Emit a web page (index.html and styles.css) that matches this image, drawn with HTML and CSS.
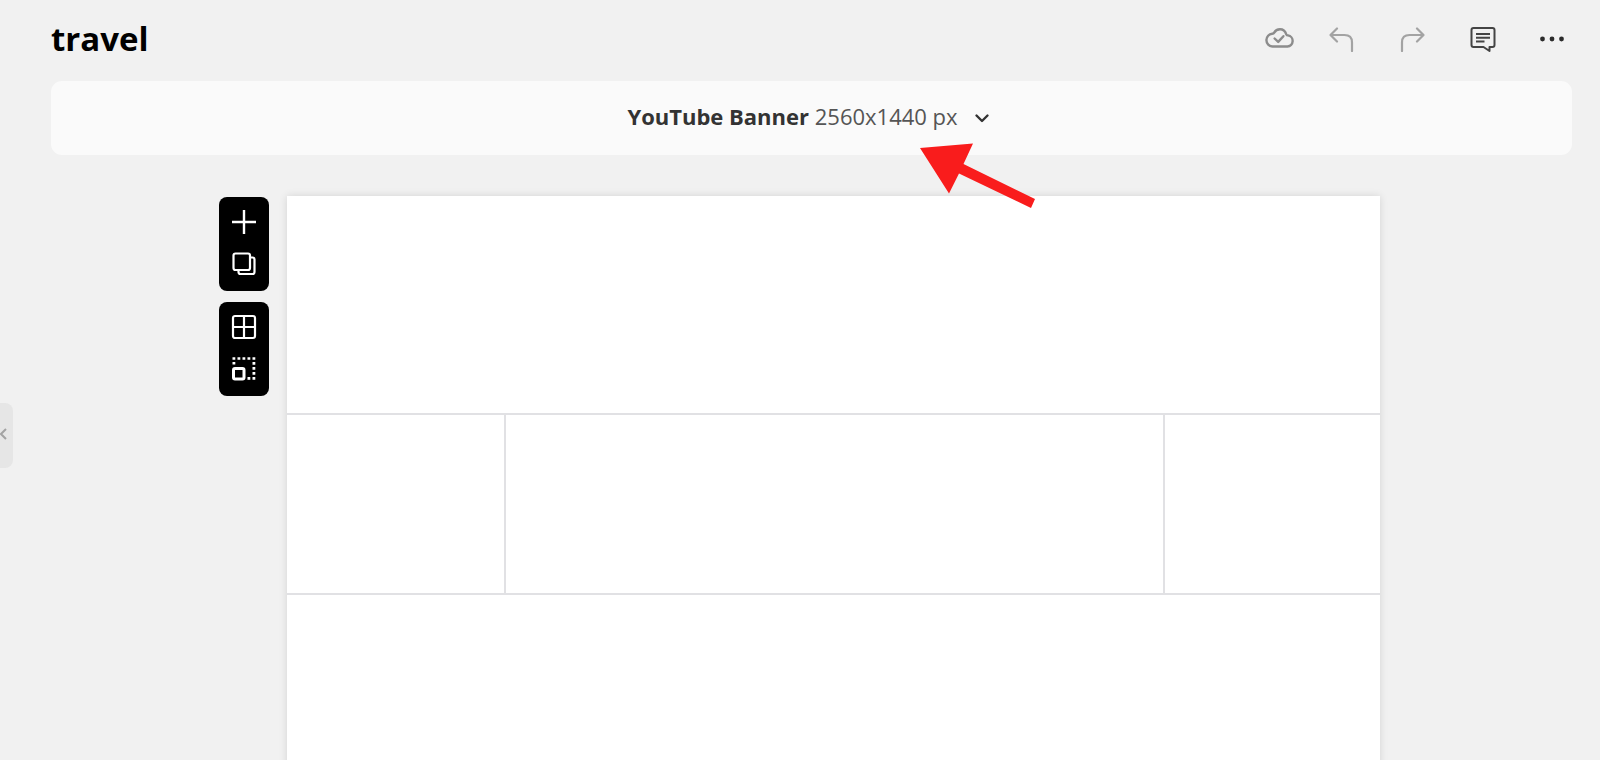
FILE: index.html
```html
<!DOCTYPE html>
<html lang="en">
<head>
    <meta charset="UTF-8">
    <meta name="viewport" content="width=device-width, initial-scale=1.0">
    <title>travel</title>
    <link rel="stylesheet" href="styles.css">
</head>
<body>
    <header class="topbar">
        <h1 class="project-name">travel</h1>
        <div class="actions">
            <div class="action-group">
                <button type="button" class="action" aria-label="Saved">
                    <svg width="32" height="28" viewBox="0 1 32 28" fill="none" stroke="#8c8c8c" stroke-width="2.4" stroke-linecap="round" stroke-linejoin="round">
                        <path d="M8.5 22.5H23.5A5.6 5.6 0 0 0 24 11.4C23.2 11.4 22.6 11 22.2 10.2C21.2 7 19 5.2 16 5.2C13.4 5.2 11.4 6.3 10.2 8.6C9.8 9.4 9.2 9.7 8.3 9.7C5 9.9 2.4 12.7 2.4 16.1C2.4 19.7 5.2 22.5 8.5 22.5Z"/>
                        <path d="M10.6 14.5L14.2 17.9L19.4 12.2"/>
                    </svg>
                </button>
                <button type="button" class="action" aria-label="Undo">
                    <svg width="26" height="26" viewBox="0 0 26 26" fill="none" stroke="#a3a3a3" stroke-width="2.2" stroke-linecap="round" stroke-linejoin="round">
                        <path d="M8 2.5L1.5 9L8 15.5M1.5 9H15.5Q23 9 23 16.500V25"/>
                    </svg>
                </button>
            </div>
            <button type="button" class="action" aria-label="Redo">
                <svg width="26" height="26" viewBox="0 0 26 26" fill="none" stroke="#a3a3a3" stroke-width="2.2" stroke-linecap="round" stroke-linejoin="round">
                    <path d="M18 2.5L24.5 9L18 15.5M24.5 9H10.5Q3 9 3 16.5V25"/>
                </svg>
            </button>
            <button type="button" class="action" aria-label="Comments">
                <svg width="28" height="28" viewBox="-1 0 28 28" fill="none" stroke="#444" stroke-width="2" stroke-linejoin="round">
                    <path d="M4.500 3H23.500Q25.500 3 25.500 5V20Q25.500 22 23.500 22H20.500V26L14.500 22H4.500Q2.500 22 2.500 20V5Q2.500 3 4.500 3Z"/>
                    <path d="M7 9H21M7 12.700H21M7 16.400H15.500"/>
                </svg>
            </button>
            <button type="button" class="action" aria-label="More">
                <svg width="28" height="28" viewBox="0 0 28 28" fill="#2b2b2b">
                    <circle cx="4.5" cy="14" r="2.4"/>
                    <circle cx="14" cy="14" r="2.4"/>
                    <circle cx="23.5" cy="14" r="2.4"/>
                </svg>
            </button>
        </div>
    </header>

    <div class="size-bar">
        <button type="button" class="size-button">
            <span><strong>YouTube Banner</strong> 2560x1440 px</span>
            <svg width="16" height="16" viewBox="0 0 16 16" fill="none" stroke="#333" stroke-width="2.4" stroke-linecap="round" stroke-linejoin="round">
                <path d="M2.500 7.500L8 13L13.500 7.500"/>
            </svg>
        </button>
        <svg class="arrow" width="120" height="70" viewBox="0 0 120 70" fill="#f91c1c">
            <path d="M2 6L55 1.500L45.500 22L117 57L113 66L41 31.500L31 51.500Z"/>
        </svg>
    </div>

    <main class="workspace">
        <div class="tools">
            <div class="tool-group">
                <button type="button" class="tool" aria-label="Add page">
                    <svg width="26" height="26" viewBox="0 0 26 26" fill="none" stroke="#fff" stroke-width="2.4">
                        <path d="M13 1V25M1 13H25"/>
                    </svg>
                </button>
                <button type="button" class="tool" aria-label="Duplicate page">
                    <svg width="26" height="26" viewBox="0 0 26 26" fill="none" stroke="#fff" stroke-width="2.2">
                        <rect x="2.500" y="2.500" width="16.500" height="16.500" rx="2"/>
                        <path d="M19 6.500H21.500Q23.500 6.500 23.500 8.500V21Q23.500 23 21.500 23H9.500Q7.500 23 7.500 21V19"/>
                    </svg>
                </button>
            </div>
            <div class="tool-group">
                <button type="button" class="tool" aria-label="Grid">
                    <svg width="26" height="26" viewBox="0 0 26 26" fill="none" stroke="#fff" stroke-width="2.2">
                        <rect x="2" y="2" width="22" height="22" rx="2"/>
                        <path d="M13 2V24M2 13H24"/>
                    </svg>
                </button>
                <button type="button" class="tool" aria-label="Resize">
                    <svg width="26" height="26" viewBox="0 0 26 26" fill="none" stroke="#fff">
                        <rect x="2.500" y="12.500" width="10.500" height="10.500" rx="1.500" stroke-width="3"/>
                        <path d="M1.500 2.500H25M1.500 7.300H4.300" stroke-width="2.600" stroke-dasharray="2.800 2.200"/>
                        <path d="M22.900 6V25" stroke-width="2.800" stroke-dasharray="2.800 2.200"/>
                        <path d="M16.500 22.400H19.300" stroke-width="2.800"/>
                    </svg>
                </button>
            </div>
        </div>
        <div class="canvas">
            <div class="zone zone-top"></div>
            <div class="zone zone-left"></div>
            <div class="zone zone-safe"></div>
            <div class="zone zone-right"></div>
            <div class="zone zone-bottom"></div>
        </div>
    </main>

    <button type="button" class="panel-toggle" aria-label="Open panel">
        <svg width="8" height="14" viewBox="0 0 8 14" fill="none" stroke="#a3a3a3" stroke-width="2">
            <path d="M6 2L1 7L6 12"/>
        </svg>
    </button>
</body>
</html>
```
FILE: styles.css
```css
* {
    box-sizing: border-box;
}
body {
    font-family: "Open Sans", "Noto Sans", sans-serif;
    margin: 0;
    height: 100vh;
    overflow: hidden;
    background-color: #f1f1f1;
}
button {
    font-family: inherit;
    padding: 0;
    border: none;
    background: none;
    cursor: pointer;
}
svg {
    display: block;
}
.topbar {
    display: flex;
    justify-content: space-between;
    align-items: center;
    height: 81px;
    padding: 0 34px 4px 51px;
}
.project-name {
    margin: 0;
    font-size: 33px;
    line-height: 40px;
    font-weight: bold;
    color: #000;
}
.actions {
    display: flex;
    align-items: center;
    gap: 42px;
}
.action-group {
    display: flex;
    align-items: center;
    gap: 34px;
}
.action {
    display: flex;
    justify-content: center;
    width: 28px;
}
.action svg {
    flex-shrink: 0;
}
.size-bar {
    position: relative;
    display: flex;
    justify-content: center;
    align-items: center;
    height: 74px;
    margin: 0 28px 0 51px;
    border-radius: 11px;
    background-color: #fafafa;
}
.size-button {
    display: flex;
    align-items: center;
    gap: 16px;
    padding: 0 6px 4px 0;
    font-size: 22px;
    line-height: 30px;
    color: #555;
}
.size-button strong {
    font-weight: bold;
    color: #333;
}
/* points at the size selector */
.arrow {
    position: absolute;
    top: 61px;
    left: calc(50% + 106px);
    z-index: 1;
}
.workspace {
    display: flex;
    align-items: flex-start;
    gap: 18px;
    padding: 41px 220px 0 219px;
}
.tools {
    display: flex;
    flex-direction: column;
    gap: 11px;
    padding-top: 1px;
}
.tool-group {
    display: flex;
    flex-direction: column;
    align-items: center;
    gap: 16px;
    width: 50px;
    padding: 12px 0 14px;
    border-radius: 8px;
    background-color: #000;
}
.canvas {
    flex: 1;
    display: grid;
    grid-template-columns: 217fr 660fr 215fr;
    grid-template-rows: 219fr 177fr 218fr;
    aspect-ratio: 16 / 9;
    background-color: #fff;
    box-shadow: 0 0 8px rgba(0, 0, 0, 0.12);
}
.zone {
    border: 0 solid #e1e1e4;
}
.zone-top,
.zone-bottom {
    grid-column: 1 / -1;
}
.zone-top {
    border-bottom-width: 2px;
}
.zone-bottom {
    border-top-width: 2px;
}
.zone-safe {
    border-left-width: 2px;
    border-right-width: 2px;
}
/* sits on the left edge of the window */
.panel-toggle {
    position: absolute;
    left: 0;
    top: 403px;
    display: flex;
    align-items: center;
    width: 13px;
    height: 65px;
    padding-bottom: 4px;
    border-radius: 0 8px 8px 0;
    background-color: #e6e6e6;
}
```
